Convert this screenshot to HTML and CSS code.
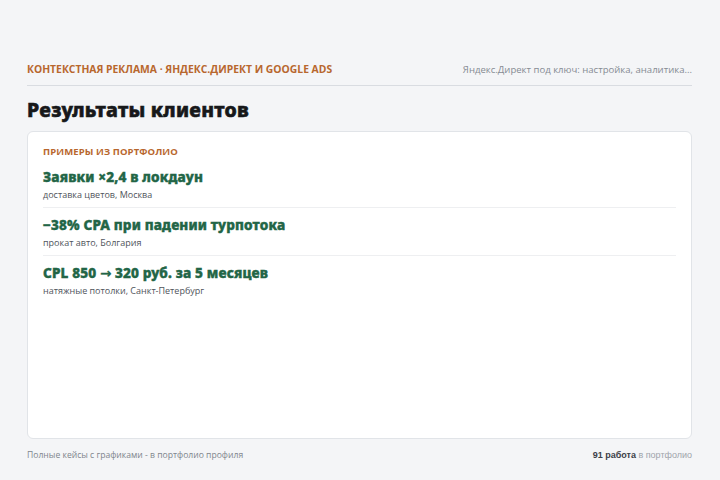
FILE: index.html
```html
<!DOCTYPE html>
<html lang="ru">
<head>
<meta charset="utf-8">
<link rel="stylesheet" href="styles.css">
</head>
<body>
<div class="page">
  <header class="top">
    <div class="kicker">Контекстная реклама · Яндекс.Директ и Google Ads</div>
    <div class="tagline">Яндекс.Директ под ключ: настройка, аналитика...</div>
  </header>
  <h1 class="title">Результаты клиентов</h1>
  <section class="card">
    <div class="label">Примеры из портфолио</div>
    <ul class="cases">
      <li class="case">
        <div class="case-title">Заявки ×2,4 в локдаун</div>
        <div class="case-sub">доставка цветов, Москва</div>
      </li>
      <li class="case">
        <div class="case-title">−38% CPA при падении турпотока</div>
        <div class="case-sub">прокат авто, Болгария</div>
      </li>
      <li class="case">
        <div class="case-title">CPL 850 <span class="arrow">→</span> 320 руб. за 5 месяцев</div>
        <div class="case-sub">натяжные потолки, Санкт-Петербург</div>
      </li>
    </ul>
  </section>
  <footer class="bottom">
    <div class="note">Полные кейсы с графиками - в портфолио профиля</div>
    <div class="count"><b>91 работа</b> в портфолио</div>
  </footer>
</div>
</body>
</html>
```

FILE: styles.css
```css
html, body {
  margin: 0;
  padding: 0;
  background: #f4f5f7;
}
body {
  font-family: "Open Sans", "Noto Sans", sans-serif;
  width: 720px;
  height: 480px;
  overflow: hidden;
}
.page {
  box-sizing: border-box;
  height: 480px;
  padding: 61px 28px 0 27px;
  display: flex;
  flex-direction: column;
}
.top {
  display: flex;
  justify-content: space-between;
  align-items: baseline;
  padding-bottom: 7px;
  border-bottom: 1px solid #d9dce1;
}
.kicker {
  font-size: 10.35px;
  font-weight: 700;
  text-transform: uppercase;
  color: #b8672e;
  line-height: 16px;
}
.tagline {
  font-size: 9.55px;
  color: #868b93;
  line-height: 16px;
}
.title {
  margin: 10px 0 7px;
  font-family: "Noto Sans", "Open Sans", sans-serif;
  font-size: 19.5px;
  font-weight: 800;
  letter-spacing: 0.25px;
  color: #17181a;
  -webkit-text-stroke: 0.6px #17181a;
  line-height: 28px;
}
.card {
  flex: 0 0 auto;
  height: 308px;
  box-sizing: border-box;
  background: #fff;
  border: 1px solid #e1e4e8;
  border-radius: 6px;
  padding: 13px 15px 0 15px;
}
.label {
  font-size: 9.5px;
  font-weight: 700;
  text-transform: uppercase;
  color: #b8672e;
  line-height: 14px;
  letter-spacing: 0.1px;
  margin-bottom: 1px;
}
.cases {
  list-style: none;
  margin: 0;
  padding: 0;
}
.case {
  padding: 7px 0 5px;
  border-bottom: 1px solid #eeeff1;
}
.case:last-child {
  border-bottom: none;
}
.case-title {
  font-family: "Noto Sans", "Open Sans", sans-serif;
  font-size: 13.6px;
  font-weight: 800;
  letter-spacing: 0.15px;
  color: #226546;
  -webkit-text-stroke: 0.45px #226546;
  line-height: 20px;
}
.arrow {
  font-family: "DejaVu Sans", sans-serif;
  font-size: 13.6px;
  font-weight: 700;
  -webkit-text-stroke: 0.2px #226546;
}
.case-sub {
  font-size: 9px;
  color: #4f545b;
  line-height: 15px;
}
.bottom {
  display: flex;
  justify-content: space-between;
  align-items: baseline;
  padding-top: 9px;
  font-size: 8.6px;
  line-height: 14px;
}
.note {
  color: #80858d;
}
.count {
  font-family: "Liberation Sans", Arial, sans-serif;
  font-size: 9px;
  color: #a0a4ab;
}
.count b {
  color: #3c4047;
  font-weight: 700;
}
```
